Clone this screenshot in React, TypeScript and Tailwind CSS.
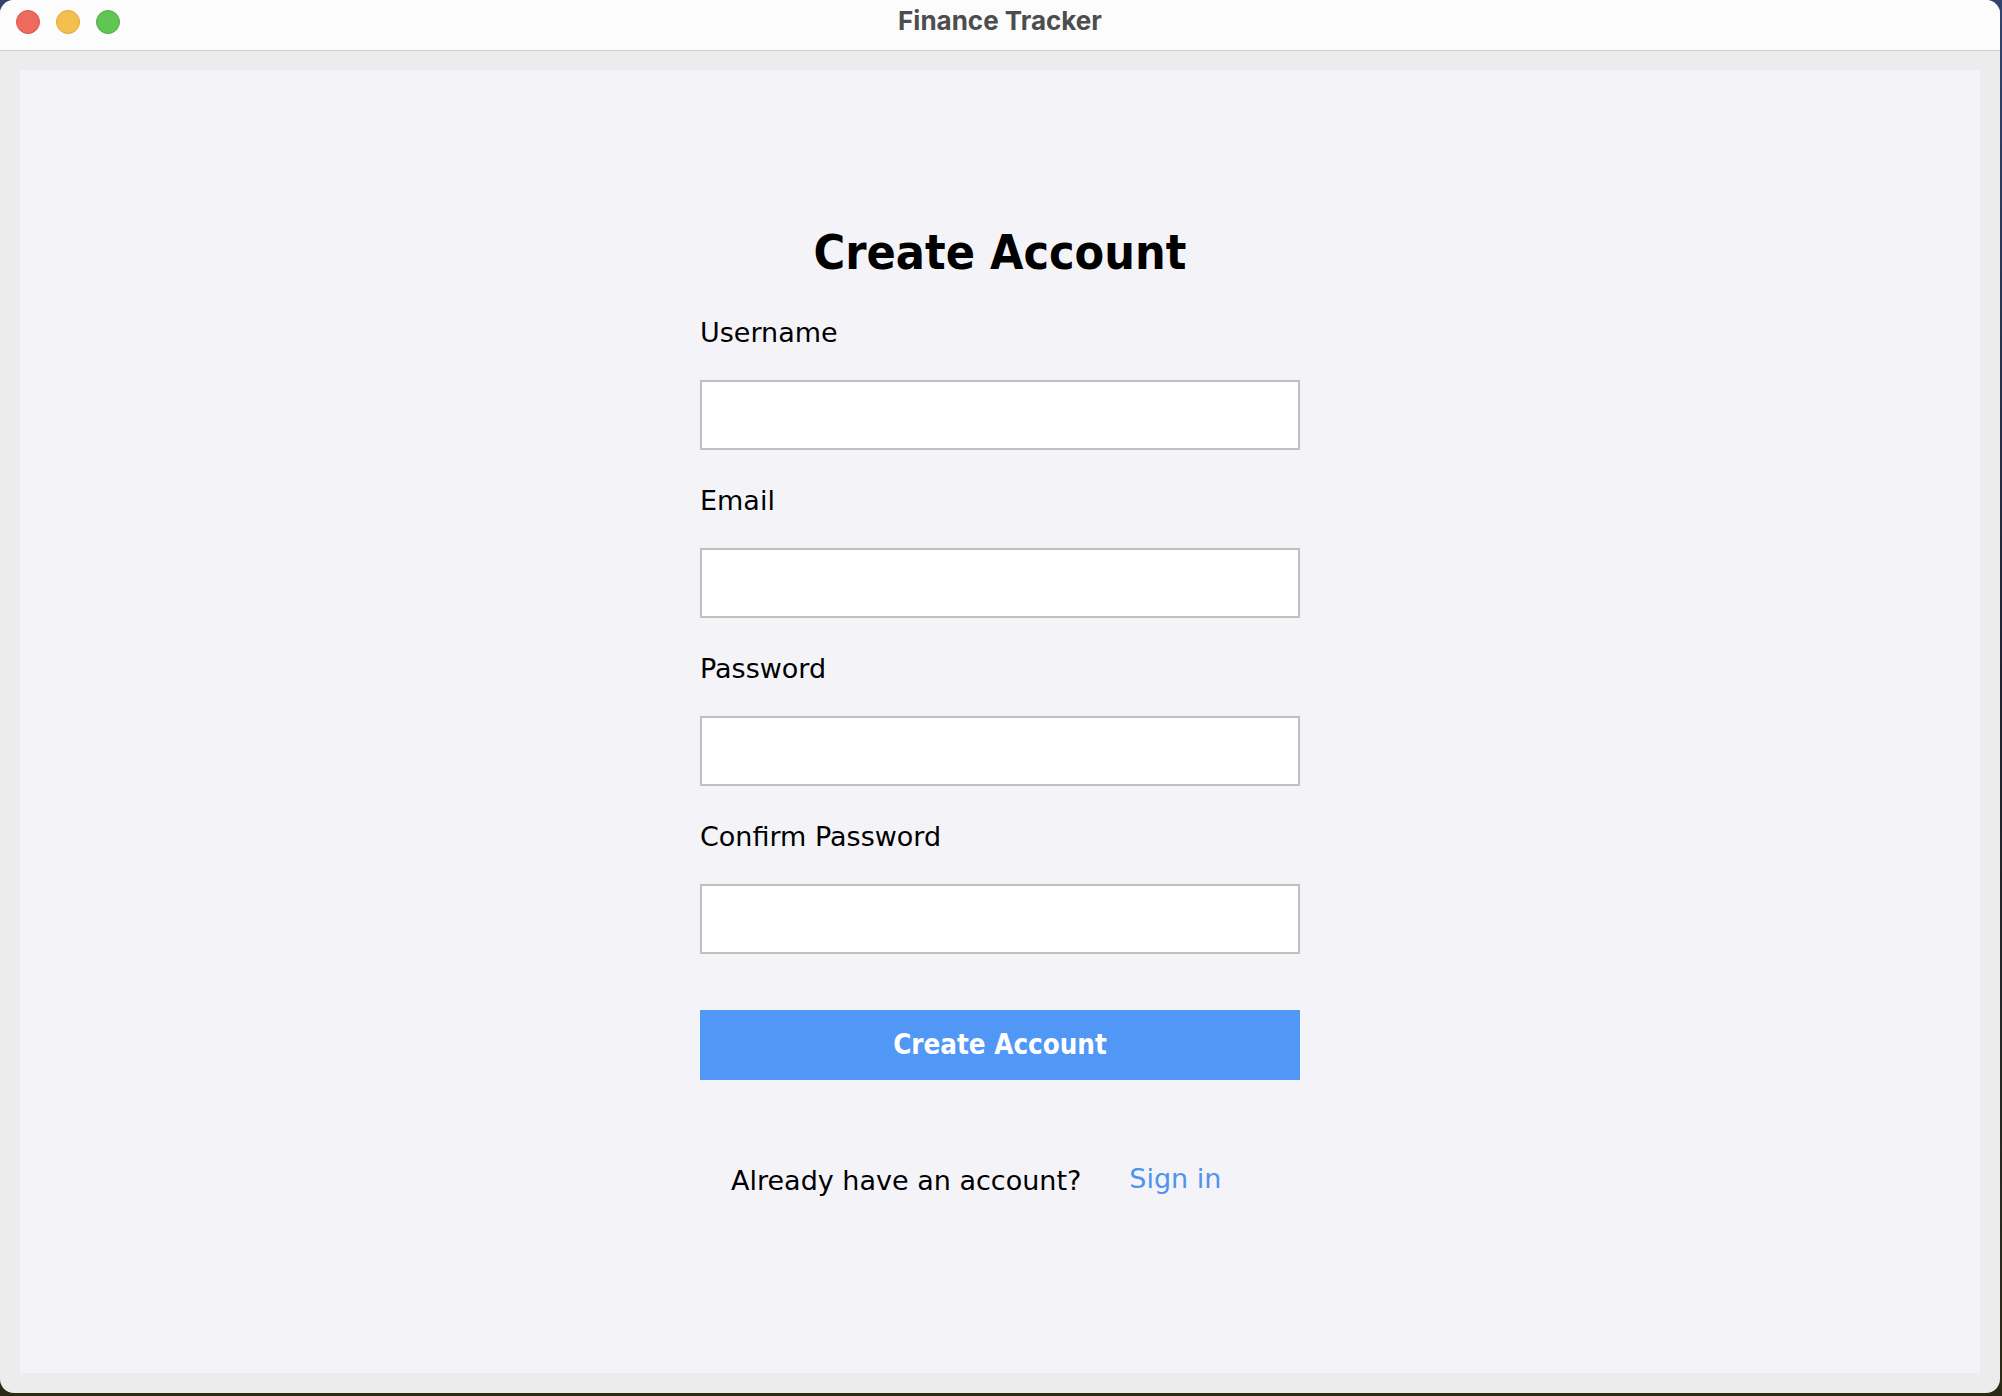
import React from "react";

const fontMain = { fontFamily: '"DejaVu Sans", "Liberation Sans", sans-serif' };

function Field({ label }: { label: string }) {
  return (
    <div className="flex flex-col">
      <div className="text-[27px] leading-[25px] text-black h-[25px]">{label}</div>
      <div className="mt-[35px] h-[70px] w-[600px] bg-white border-2 border-[#c0c0c0]" />
    </div>
  );
}

export default function App() {
  return (
    <div className="w-[2002px] h-[1396px] bg-gradient-to-b from-[#2f4470] via-[#1d2230] to-[#2b2a16] overflow-hidden">
      <div className="w-[2000px] h-[1393px] rounded-[14px] overflow-hidden bg-[#ececec] flex flex-col">
        <div className="h-[51px] shrink-0 bg-[#fcfcfc] border-b border-[#cdcdcd] relative flex items-center justify-center">
          <div className="absolute left-[16px] top-[10px] flex gap-[16px]">
            <div className="w-[24px] h-[24px] rounded-full bg-[#ee6a5f] border border-[#d9564b]" />
            <div className="w-[24px] h-[24px] rounded-full bg-[#f5bf4f] border border-[#dfa63a]" />
            <div className="w-[24px] h-[24px] rounded-full bg-[#61c554] border border-[#4eaf42]" />
          </div>
          <div
            className="text-[26px] font-bold text-[#4d4d4d] leading-none -mt-[8px]"
            style={{ fontFamily: 'Inter, "Liberation Sans", sans-serif' }}
          >
            Finance Tracker
          </div>
        </div>
        <div className="flex-1 px-[20px] pt-[19px] pb-[20px]">
          <div className="h-full bg-[#f4f4f8] flex flex-col items-center pt-[158px]" style={fontMain}>
            <div className="text-[48px] leading-[48px] font-bold text-black font-stretch-condensed">
              Create Account
            </div>
            <div className="mt-[44px] flex flex-col gap-[38px]">
              <Field label="Username" />
              <Field label="Email" />
              <Field label="Password" />
              <Field label="Confirm Password" />
            </div>
            <button className="mt-[56px] w-[600px] h-[70px] bg-[#5197f6] text-white text-[27.5px] font-bold font-stretch-condensed flex items-center justify-center">
              Create Account
            </button>
            <div className="mt-[87px] w-[600px] flex items-start pl-[31px] gap-[48px] text-[27px] leading-[27px]">
              <span className="text-black">Already have an account?</span>
              <span className="text-[#4f93ee] -mt-[2px]">Sign in</span>
            </div>
          </div>
        </div>
      </div>
    </div>
  );
}
